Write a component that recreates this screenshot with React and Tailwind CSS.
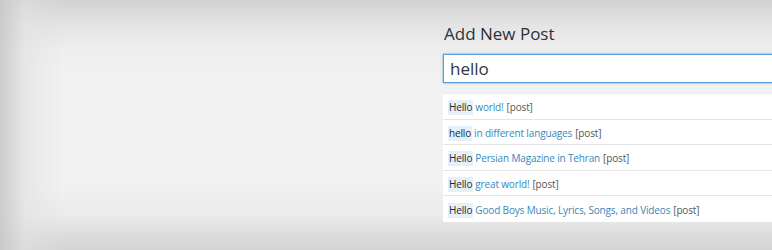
const results = [
    { match: "Hello", rest: "world!" },
    { match: "hello", rest: "in different languages" },
    { match: "Hello", rest: "Persian Magazine in Tehran" },
    { match: "Hello", rest: "great world!" },
    { match: "Hello", rest: "Good Boys Music, Lyrics, Songs, and Videos" },
];

export default function App() {
    return (
        <div className="relative w-[772px] h-[250px] overflow-hidden bg-[#f1f1f1] font-['Open_Sans',sans-serif]">
            {/* Vignette */}
            <div className="absolute inset-0 bg-[linear-gradient(to_bottom,#d1d1d1_0px,#e4e4e4_25px,#eeeeee_50px,rgba(241,241,241,0)_70px,rgba(241,241,241,0)_185px,#ebebeb_215px,#dcdcdc_235px,#d4d4d4_250px)]" />
            <div className="absolute inset-0 bg-[linear-gradient(to_right,rgba(200,200,200,0.9)_0px,rgba(225,225,225,0.6)_25px,rgba(241,241,241,0)_65px)]" />

            <div className="relative flex flex-col pl-[443px] pt-[22px]">
                <h1 className="pl-[1px] text-[17px] leading-[24px] text-[#2c3135]">Add New Post</h1>

                <div className="mt-[8px] h-[29px] w-[360px] flex items-center bg-white border border-[#5b9dd9] shadow-[0_0_2px_rgba(30,140,190,0.8)] pl-[6px]">
                    <span className="text-[17px] text-[#32373c]">hello</span>
                </div>

                <ul className="mt-[10px] w-[360px] bg-white border-t border-[#f3e6e6]">
                    {results.map((r, i) => (
                        <li
                            key={i}
                            className={`h-[25.6px] flex items-center pl-[5px] pt-[3px] text-[10px] tracking-[-0.15px] ${
                                i < results.length - 1 ? "border-b border-[#e5e5e5]" : ""
                            }`}
                        >
                            <span className="bg-[#e6f0f8] px-[1px] text-[#23282d]">{r.match}</span>
                            <span className="ml-[2px] text-[#3787b9]">{r.rest}</span>
                            <span className="ml-[3px] text-[#555]">[post]</span>
                        </li>
                    ))}
                </ul>
            </div>
        </div>
    );
}
